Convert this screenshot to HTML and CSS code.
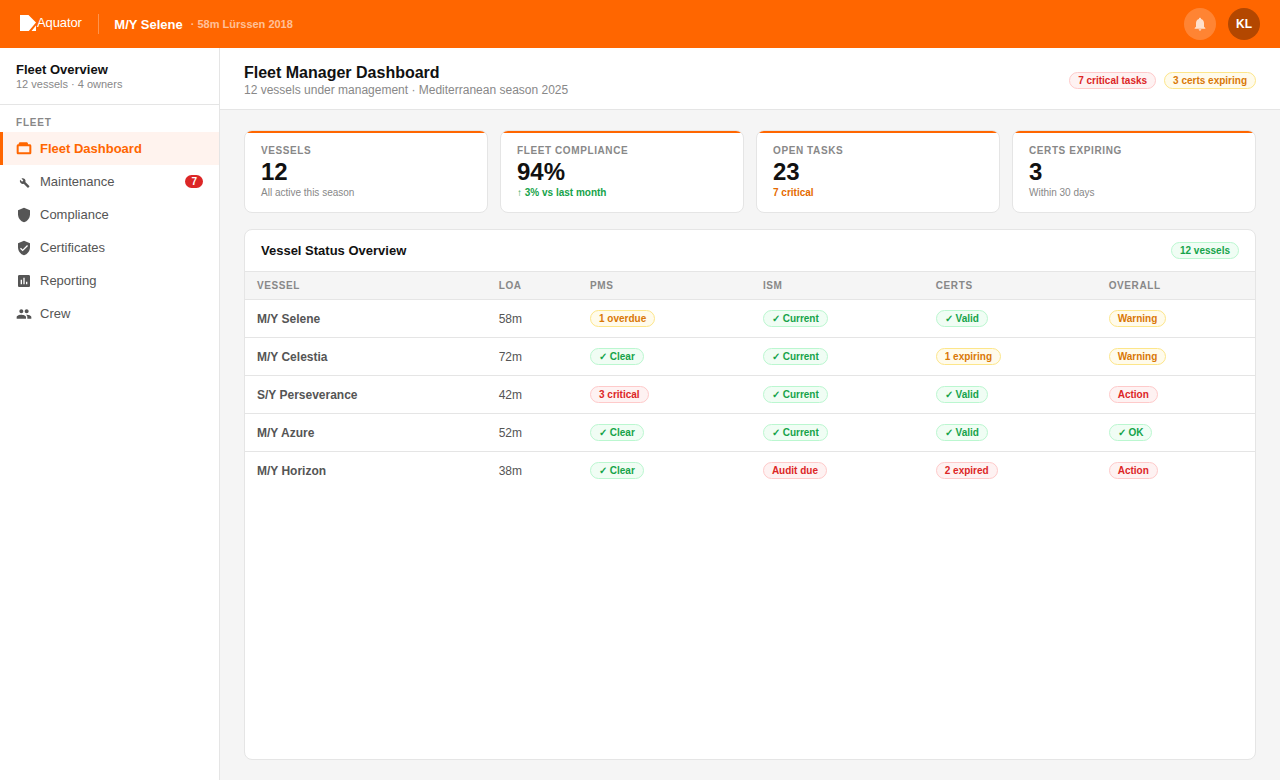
FILE: index.html
```html
<!DOCTYPE html>
<html lang="en">
<head>
<meta charset="utf-8">
<title>Aquator Fleet Manager Dashboard</title>
<link rel="stylesheet" href="styles.css">
</head>
<body>
<header class="topbar">
  <div class="brand">
    <svg class="brand-mark" viewBox="0 0 16 16"><path d="M0 0H8.500L16 7.500L8.800 16H0Z M16 10.500V16H11.500Z" fill="#fff"/></svg>
    <span class="brand-name">Aquator</span>
  </div>
  <div class="top-divider"></div>
  <span class="yacht-name">M/Y Selene</span>
  <span class="yacht-meta">· 58m Lürssen 2018</span>
  <div class="top-actions">
    <button class="bell"><svg viewBox="0 0 24 24" width="16" height="16"><path d="M12 22c1.100 0 2-.9 2-2h-4c0 1.100.9 2 2 2zm6-6v-5c0-3.070-1.630-5.640-4.500-6.320V4c0-.830-.670-1.500-1.500-1.500s-1.500.670-1.500 1.500v.680C7.640 5.360 6 7.920 6 11v5l-2 2v1h16v-1l-2-2z"/></svg></button>
    <div class="avatar">KL</div>
  </div>
</header>
<div class="shell">
  <aside class="sidebar">
    <div class="side-head">
      <div class="side-title">Fleet Overview</div>
      <div class="side-sub">12 vessels · 4 owners</div>
    </div>
    <div class="side-label">FLEET</div>
    <nav class="nav">
      <a class="nav-item active"><svg viewBox="0 0 24 24"><path fill-rule="evenodd" d="M4 5V4.500C4 3 5 2 6.400 2H15.600C17 2 18 3 18 4.500V5H20.500C22 5 23 6 23 7.500V17.500C23 19 22 20 20.500 20H3.500C2 20 1 19 1 17.500V7.500C1 6 2 5 3.500 5ZM4 8V17H20V8Z"/></svg>Fleet Dashboard</a>
      <a class="nav-item"><svg viewBox="0 0 24 24"><path d="M22.700 19l-9.100-9.100c.9-2.300.4-5-1.500-6.900-2-2-5-2.400-7.400-1.300L9 6 6 9 1.600 4.700C.4 7.100.9 10.100 2.900 12.100c1.900 1.900 4.600 2.400 6.900 1.500l9.100 9.100c.4.400 1 .4 1.400 0l2.300-2.300c.5-.4.5-1.100.1-1.400z" transform="translate(5.200 5.700) scale(.65)"/></svg>Maintenance<span class="nav-badge">7</span></a>
      <a class="nav-item"><svg viewBox="0 0 24 24"><path d="M12 1L3 5v6c0 5.550 3.840 10.740 9 12 5.160-1.260 9-6.450 9-12V5l-9-4z"/></svg>Compliance</a>
      <a class="nav-item"><svg viewBox="0 0 24 24"><path d="M12 1L3 5v6c0 5.550 3.840 10.740 9 12 5.160-1.260 9-6.450 9-12V5l-9-4zm-2 16l-4-4 1.410-1.410L10 14.170l6.590-6.590L18 9l-8 8z"/></svg>Certificates</a>
      <a class="nav-item"><svg viewBox="0 0 24 24"><path d="M19 3H5c-1.100 0-2 .9-2 2v14c0 1.100.9 2 2 2h14c1.100 0 2-.9 2-2V5c0-1.100-.9-2-2-2zM9 17H7v-7h2v7zm4 0h-2V7h2v10zm4 0h-2v-4h2v4z"/></svg>Reporting</a>
      <a class="nav-item"><svg viewBox="0 0 24 24"><path d="M16 11c1.660 0 2.990-1.340 2.990-3S17.660 5 16 5c-1.660 0-3 1.340-3 3s1.340 3 3 3zm-8 0c1.660 0 2.990-1.340 2.990-3S9.660 5 8 5C6.340 5 5 6.340 5 8s1.340 3 3 3zm0 2c-2.330 0-7 1.170-7 3.500V19h14v-2.500c0-2.330-4.670-3.500-7-3.500zm8 0c-.29 0-.62.020-.97.050 1.160.840 1.970 1.970 1.970 3.450V19h6v-2.500c0-2.330-4.670-3.500-7-3.500z"/></svg>Crew</a>
    </nav>
  </aside>
  <main class="main">
    <div class="page-head">
      <div>
        <h1 class="page-title">Fleet Manager Dashboard</h1>
        <div class="page-sub">12 vessels under management · Mediterranean season 2025</div>
      </div>
      <div class="head-pills">
        <span class="pill red">7 critical tasks</span>
        <span class="pill amber">3 certs expiring</span>
      </div>
    </div>
    <div class="content">
      <section class="stats">
        <div class="stat"><div class="stat-label">VESSELS</div><div class="stat-value">12</div><div class="stat-note">All active this season</div></div>
        <div class="stat"><div class="stat-label">FLEET COMPLIANCE</div><div class="stat-value">94%</div><div class="stat-note good">↑ 3% vs last month</div></div>
        <div class="stat"><div class="stat-label">OPEN TASKS</div><div class="stat-value">23</div><div class="stat-note warn">7 critical</div></div>
        <div class="stat"><div class="stat-label">CERTS EXPIRING</div><div class="stat-value">3</div><div class="stat-note">Within 30 days</div></div>
      </section>
      <section class="panel">
        <div class="panel-head">
          <h2 class="panel-title">Vessel Status Overview</h2>
          <span class="pill green">12 vessels</span>
        </div>
        <table class="table">
          <thead>
            <tr><th class="c-vessel">VESSEL</th><th class="c-loa">LOA</th><th class="c-s">PMS</th><th class="c-s">ISM</th><th class="c-s">CERTS</th><th>OVERALL</th></tr>
          </thead>
          <tbody>
            <tr><td class="vessel">M/Y Selene</td><td>58m</td><td><span class="pill amber">1 overdue</span></td><td><span class="pill green">✓ Current</span></td><td><span class="pill green">✓ Valid</span></td><td><span class="pill amber">Warning</span></td></tr>
            <tr><td class="vessel">M/Y Celestia</td><td>72m</td><td><span class="pill green">✓ Clear</span></td><td><span class="pill green">✓ Current</span></td><td><span class="pill amber">1 expiring</span></td><td><span class="pill amber">Warning</span></td></tr>
            <tr><td class="vessel">S/Y Perseverance</td><td>42m</td><td><span class="pill red">3 critical</span></td><td><span class="pill green">✓ Current</span></td><td><span class="pill green">✓ Valid</span></td><td><span class="pill red">Action</span></td></tr>
            <tr><td class="vessel">M/Y Azure</td><td>52m</td><td><span class="pill green">✓ Clear</span></td><td><span class="pill green">✓ Current</span></td><td><span class="pill green">✓ Valid</span></td><td><span class="pill green">✓ OK</span></td></tr>
            <tr><td class="vessel">M/Y Horizon</td><td>38m</td><td><span class="pill green">✓ Clear</span></td><td><span class="pill red">Audit due</span></td><td><span class="pill red">2 expired</span></td><td><span class="pill red">Action</span></td></tr>
          </tbody>
        </table>
      </section>
    </div>
  </main>
</div>
</body>
</html>
```
FILE: styles.css
```css
* { box-sizing: border-box; }
html, body { height: 100%; }
body { margin: 0; height: 780px; overflow: hidden; font-family: "Liberation Sans", Arial, sans-serif; background: #f5f5f5; color: #111; display: flex; flex-direction: column; }

.topbar { height: 48px; flex: none; background: #ff6600; display: flex; align-items: center; padding: 0 20px; color: #fff; }
.brand { display: flex; align-items: center; }
.brand-mark { width: 16px; height: 16px; display: block; margin: -2px 1px 0 0; }
.brand-name { font-size: 13px; letter-spacing: -.1px; color: #fff; margin-top: -3px; }
.top-divider { width: 1px; height: 20px; background: rgba(255,255,255,.3); margin: 0 15.500px 0 16px; }
.yacht-name { font-size: 13px; font-weight: 700; }
.yacht-meta { font-size: 11px; font-weight: 700; color: rgba(255,255,255,.6); margin-left: 8px; }
.top-actions { margin-left: auto; display: flex; align-items: center; gap: 12px; }
.bell { width: 32px; height: 32px; border: 0; padding: 0; border-radius: 50%; background: rgba(255,255,255,.2); display: flex; align-items: center; justify-content: center; }
.bell svg { fill: rgba(255,255,255,.75); }
.avatar { width: 32px; height: 32px; border-radius: 50%; background: #b34700; color: #fff; font-size: 12px; font-weight: 700; display: flex; align-items: center; justify-content: center; }

.shell { flex: 1; display: flex; min-height: 0; }
.sidebar { width: 220px; flex: none; background: #fff; border-right: 1px solid #e5e5e5; }
.side-head { padding: 14px 16px 13px; border-bottom: 1px solid #e5e5e5; height: 57px; }
.side-title { font-size: 13px; font-weight: 700; line-height: 15px; }
.side-sub { font-size: 11px; color: #888; line-height: 14px; }
.side-label { font-size: 10px; font-weight: 700; letter-spacing: .8px; color: #888; padding: 12px 16px 3px; line-height: 12px; }
.nav-item { display: flex; align-items: center; height: 33px; padding: 0 16px; font-size: 13px; color: #555; gap: 8px; }
.nav-item svg { width: 16px; height: 16px; margin: 0 .5px 0 -.5px; fill: #555; flex: none; }
.nav-item.active { background: #fff3ee; color: #ff6600; font-weight: 700; border-left: 3px solid #ff6600; padding-left: 13px; }
.nav-item.active svg { fill: #ff6600; }
.nav-badge { margin-left: auto; background: #dc2626; color: #fff; font-size: 10px; font-weight: 700; padding: 0 6px; border-radius: 8px; line-height: 13px; }

.main { flex: 1; min-width: 0; display: flex; flex-direction: column; }
.page-head { height: 62px; flex: none; background: #fff; border-bottom: 1px solid #e5e5e5; padding: 4px 24px 0; display: flex; align-items: center; justify-content: space-between; }
.page-title { margin: 0; font-size: 16px; line-height: 18px; font-weight: 700; }
.page-sub { font-size: 12px; color: #888; line-height: 16px; }
.head-pills { display: flex; gap: 8px; }

.pill { display: inline-block; font-size: 10px; font-weight: 700; line-height: 15px; padding: 0 8px; border-radius: 10px; border: 1px solid; white-space: nowrap; }
.pill.red { background: #fef2f2; color: #dc2626; border-color: #fecaca; }
.pill.amber { background: #fffbeb; color: #d97706; border-color: #fde68a; }
.pill.green { background: #f0fdf4; color: #16a34a; border-color: #bbf7d0; }

.content { flex: 1; min-height: 0; padding: 20px 24px; display: flex; flex-direction: column; gap: 16px; }
.stats { display: grid; grid-template-columns: repeat(4, 1fr); gap: 12px; }
.stat { position: relative; height: 83px; background: #fff; border: 1px solid #e5e5e5; border-radius: 8px; padding: 14px 16px 0; overflow: hidden; }
.stat::before { content: ""; position: absolute; left: 0; right: 0; top: 0; height: 2px; background: #ff6600; }
.stat-label { font-size: 10px; font-weight: 700; letter-spacing: .6px; color: #888; line-height: 12px; }
.stat-value { font-size: 24px; font-weight: 700; line-height: 28px; color: #111; margin-top: 1px; }
.stat-note { font-size: 10px; color: #888; line-height: 12px; margin-top: 1px; }
.stat-note.good { color: #16a34a; font-weight: 700; }
.stat-note.warn { color: #e56a00; font-weight: 700; }

.panel { flex: 1; min-height: 0; background: #fff; border: 1px solid #e5e5e5; border-radius: 8px; overflow: hidden; }
.panel-head { height: 41px; display: flex; align-items: center; justify-content: space-between; padding: 0 16px; }
.panel-title { margin: 0; font-size: 13px; font-weight: 700; }
.table { width: 100%; border-collapse: collapse; table-layout: fixed; }
.table th { height: 28px; background: #f5f5f5; border-top: 1px solid #e5e5e5; border-bottom: 1px solid #e5e5e5; font-size: 10px; font-weight: 700; letter-spacing: .6px; color: #888; text-align: left; padding: 0 12px; }
.table td { height: 38px; border-bottom: 1px solid #e5e5e5; font-size: 12px; color: #555; padding: 0 12px; }
.table tbody tr:last-child td { border-bottom: 0; }
.c-vessel { width: 241.700px; }
.c-loa { width: 91.300px; }
.c-s { width: 172.900px; }
.vessel { font-weight: 700; }
```
